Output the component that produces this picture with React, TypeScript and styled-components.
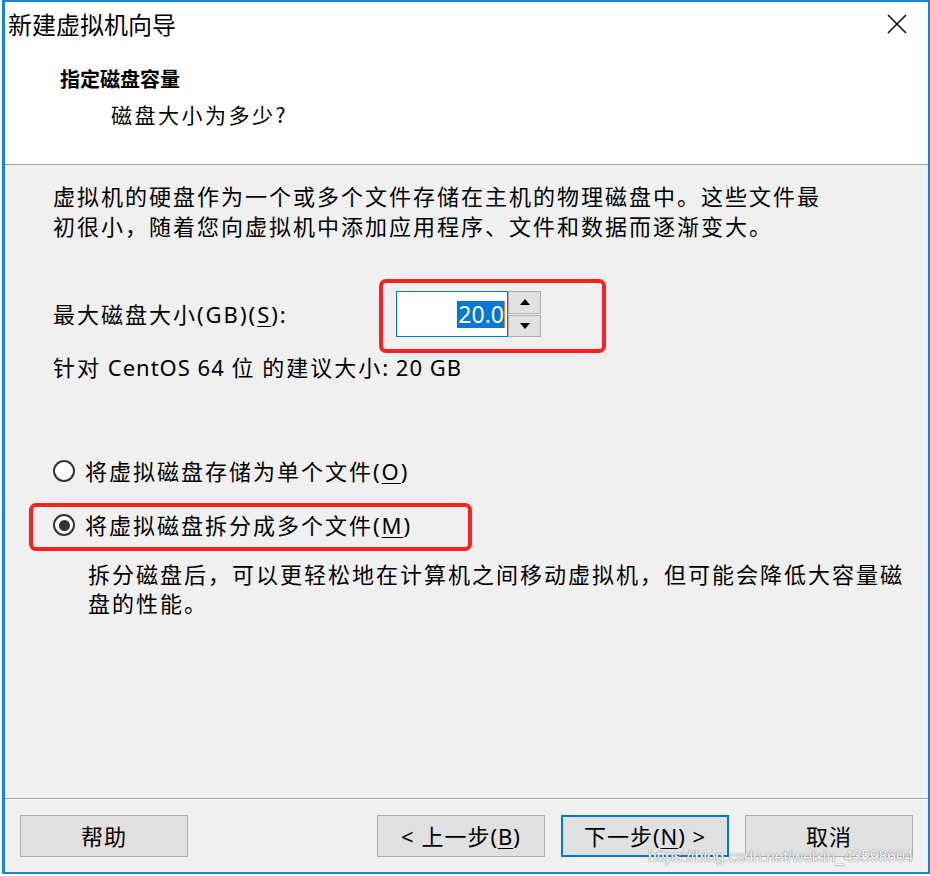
import React from "react";
import styled, { createGlobalStyle } from "styled-components";

const GlobalStyle = createGlobalStyle`
  html, body {
    margin: 0;
    padding: 0;
    background: #ffffff;
  }
  body {
    font-family: "Noto Sans", "Noto Sans CJK SC", sans-serif;
    color: #000;
  }
`;

const Window = styled.div`
  position: relative;
  margin-left: 2px;
  width: 928px;
  height: 874px;
  box-sizing: border-box;
  border: 2px solid #1883d7;
  border-left-width: 3px;
  background: #f0f0f0;
  display: flex;
  flex-direction: column;
  overflow: hidden;
`;

const TitleBar = styled.div`
  height: 44px;
  flex: none;
  background: #fff;
  display: flex;
  align-items: center;
  justify-content: space-between;
  padding: 0 21px 0 3px;
`;

const WindowTitle = styled.div`
  font-family: "Noto Sans CJK SC", sans-serif;
  font-size: 24px;
  line-height: 30px;
`;

const CloseButton = styled.div`
  width: 20px;
  height: 20px;
  display: flex;
`;

const Header = styled.div`
  flex: none;
  background: #fff;
  padding: 18px 0 35px 55px;
  border-bottom: 1px solid #a0a0a0;
`;

const HeaderTitle = styled.div`
  font-family: "Noto Sans CJK SC", sans-serif;
  font-size: 20px;
  font-weight: 700;
  line-height: 30px;
`;

const HeaderSubtitle = styled.div`
  font-family: "Noto Sans CJK SC", sans-serif;
  font-size: 21px;
  line-height: 30px;
  margin-top: 5px;
  padding-left: 51px;
  letter-spacing: 2.5px;
`;

const Content = styled.div`
  flex: 1;
  padding: 16px 0 0 48px;
  font-size: 22px;
  letter-spacing: 2px;
  line-height: 30px;
`;

const Paragraph = styled.div<{ $top?: number; $indent?: number; $lh?: number }>`
  margin-top: ${(p) => p.$top ?? 0}px;
  padding-left: ${(p) => p.$indent ?? 0}px;
  line-height: ${(p) => p.$lh ?? 30}px;
`;

const Latin = styled.span`
  letter-spacing: 1px;
`;

const SizeRow = styled.div`
  margin-top: 50px;
  display: grid;
  grid-template-columns: 343px auto;
  align-items: center;
  height: 46px;
`;

const Spinner = styled.div`
  display: flex;
  height: 46px;
`;

const SpinInput = styled.div`
  width: 112px;
  box-sizing: border-box;
  height: 46px;
  border: 1px solid #0078d7;
  background: #fff;
  display: flex;
  align-items: center;
  justify-content: flex-end;
  padding-right: 2px;
`;

const Selected = styled.span`
  background: #0078d7;
  color: #fff;
  font-size: 23px;
  letter-spacing: 0;
  line-height: 27px;
  height: 27px;
  padding: 0 0 0 1px;
  border-right: 1px solid #f08020;
`;

const SpinButtons = styled.div`
  display: flex;
  flex-direction: column;
  width: 33px;
  gap: 1px;
`;

const SpinButton = styled.div`
  flex: 1;
  box-sizing: border-box;
  background: #e1e1e1;
  border: 1px solid #adadad;
  display: flex;
  align-items: center;
  justify-content: center;
`;

const RadioRow = styled.div<{ $top: number }>`
  margin-top: ${(p) => p.$top}px;
  display: flex;
  align-items: center;
  height: 30px;
  gap: 10px;
`;

const RadioCircle = styled.span<{ $checked?: boolean }>`
  width: 22px;
  height: 22px;
  box-sizing: border-box;
  border-radius: 50%;
  border: 2px solid #333;
  background: #fff;
  display: flex;
  align-items: center;
  justify-content: center;
  &::after {
    content: "";
    width: 11px;
    height: 11px;
    border-radius: 50%;
    background: ${(p) => (p.$checked ? "#333" : "transparent")};
  }
`;

const U = styled.span`
  text-decoration: underline;
  text-underline-offset: 3px;
  text-decoration-thickness: 1px;
`;

const Footer = styled.div`
  flex: none;
  border-top: 1px solid #a0a0a0;
  box-shadow: inset 0 1px 0 #ffffff;
  padding: 16px 15px 15px 15px;
  display: flex;
  gap: 16px;
`;

const Spacer = styled.div`
  flex: 1;
`;

const Button = styled.div<{ $default?: boolean }>`
  width: 168px;
  height: 42px;
  box-sizing: border-box;
  background: #e1e1e1;
  border: ${(p) => (p.$default ? "2px solid #0078d7" : "1px solid #adadad")};
  display: flex;
  align-items: center;
  justify-content: center;
  font-size: 22px;
  letter-spacing: 1px;
  line-height: 30px;
`;

const Annotation = styled.div<{ $l: number; $t: number; $w: number; $h: number }>`
  position: absolute;
  left: ${(p) => p.$l}px;
  top: ${(p) => p.$t}px;
  width: ${(p) => p.$w}px;
  height: ${(p) => p.$h}px;
  box-sizing: border-box;
  border: 4px solid #ff2020;
  border-radius: 7px;
  pointer-events: none;
`;

const Watermark = styled.div`
  position: absolute;
  left: 643px;
  top: 846px;
  font-family: "Liberation Sans", Arial, sans-serif;
  font-size: 15.6px;
  color: rgba(255, 255, 255, 0.95);
  text-shadow: 0 0 1px #808080, 0 0 1px #808080;
  white-space: nowrap;
  pointer-events: none;
`;

const Arrow = ({ up }: { up?: boolean }) => (
  <svg width="10" height="6" viewBox="0 0 10 6">
    <polygon points={up ? "5,0 10,6 0,6" : "0,0 10,0 5,6"} fill="#000" />
  </svg>
);

export default function App() {
  return (
    <>
      <GlobalStyle />
      <Window>
        <TitleBar>
          <WindowTitle>新建虚拟机向导</WindowTitle>
          <CloseButton>
            <svg width="20" height="20" viewBox="0 0 20 20">
              <path d="M1 1 L19 19 M19 1 L1 19" stroke="#111" strokeWidth="1.6" />
            </svg>
          </CloseButton>
        </TitleBar>
        <Header>
          <HeaderTitle>指定磁盘容量</HeaderTitle>
          <HeaderSubtitle>磁盘大小为多少?</HeaderSubtitle>
        </Header>
        <Content>
          <Paragraph>
            虚拟机的硬盘作为一个或多个文件存储在主机的物理磁盘中。这些文件最
            <br />
            初很小，随着您向虚拟机中添加应用程序、文件和数据而逐渐变大。
          </Paragraph>
          <SizeRow>
            <span>
              最大磁盘大小(GB)(<U>S</U>):
            </span>
            <Spinner>
              <SpinInput>
                <Selected>20.0</Selected>
              </SpinInput>
              <SpinButtons>
                <SpinButton>
                  <Arrow up />
                </SpinButton>
                <SpinButton>
                  <Arrow />
                </SpinButton>
              </SpinButtons>
            </Spinner>
          </SizeRow>
          <Paragraph $top={15}>
            针对<Latin> CentOS 64 </Latin>位<Latin> </Latin>的建议大小<Latin>: 20 GB</Latin>
          </Paragraph>
          <RadioRow $top={74}>
            <RadioCircle />
            <span>
              将虚拟磁盘存储为单个文件(<U>O</U>)
            </span>
          </RadioRow>
          <RadioRow $top={24}>
            <RadioCircle $checked />
            <span>
              将虚拟磁盘拆分成多个文件(<U>M</U>)
            </span>
          </RadioRow>
          <Paragraph $top={20} $indent={35} $lh={29}>
            拆分磁盘后，可以更轻松地在计算机之间移动虚拟机，但可能会降低大容量磁
            <br />
            盘的性能。
          </Paragraph>
        </Content>
        <Footer>
          <Button>帮助</Button>
          <Spacer />
          <Button>
            &lt; 上一步(<U>B</U>)
          </Button>
          <Button $default>
            下一步(<U>N</U>) &gt;
          </Button>
          <Button>取消</Button>
        </Footer>
        <Annotation $l={374} $t={277} $w={227} $h={74} />
        <Annotation $l={24} $t={501} $w={443} $h={48} />
        <Watermark>https://blog.csdn.net/weixin_43598604</Watermark>
      </Window>
    </>
  );
}
